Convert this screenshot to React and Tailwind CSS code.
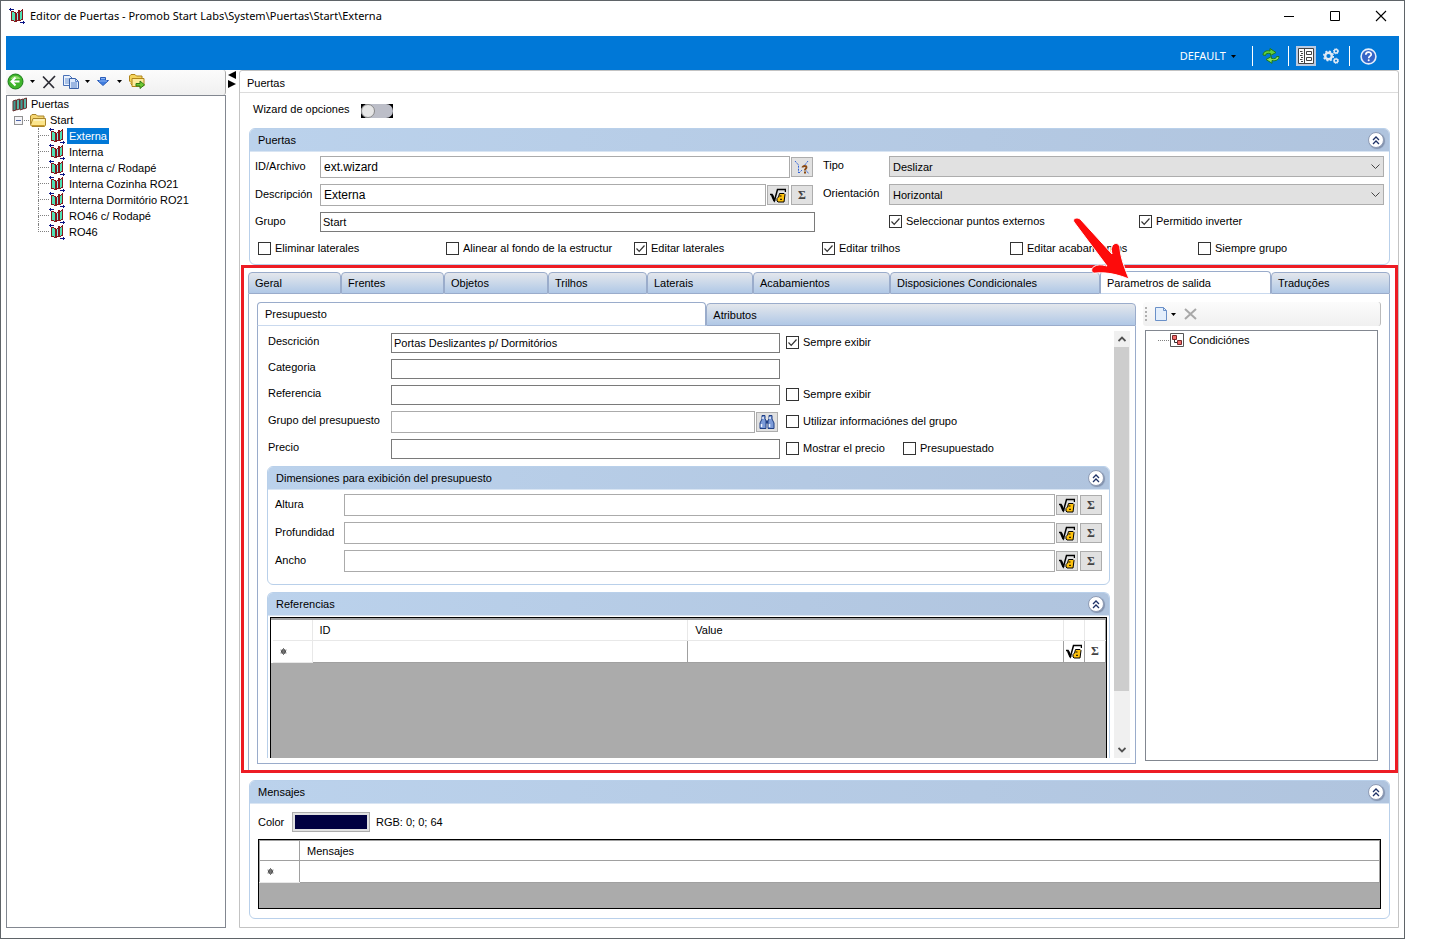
import clsx from "clsx";

const DOORS = [
    "Externa",
    "Interna",
    "Interna c/ Rodapé",
    "Interna Cozinha RO21",
    "Interna Dormitório RO21",
    "RO46 c/ Rodapé",
    "RO46",
];

const TABS = [
    { label: "Geral", width: "w-[93px]" },
    { label: "Frentes", width: "w-[103px]" },
    { label: "Objetos", width: "w-[104px]" },
    { label: "Trilhos", width: "w-[99px]" },
    { label: "Laterais", width: "w-[106px]" },
    { label: "Acabamientos", width: "w-[137px]" },
    { label: "Disposiciones Condicionales", width: "w-[210px]" },
    { label: "Parametros de salida", width: "w-[171px]", active: true },
    { label: "Traduções", width: "flex-1" },
];

const OPTIONS = [
    { label: "Eliminar laterales" },
    { label: "Alinear al fondo de la estructur" },
    { label: "Editar laterales", checked: true },
    { label: "Editar trilhos", checked: true },
    { label: "Editar acabamientos" },
    { label: "Siempre grupo" },
];

function DoorIcon() {
    return (
        <svg
            width="16"
            height="16"
            viewBox="0 0 16 16"
            className="shrink-0"
            shapeRendering="crispEdges"
            aria-hidden="true"
        >
            <path d="M3 3h2v1h2v10H5v-1H3z" fill="#4fe0b4" />
            <path d="M8 4h1V3h2v9H9v1H8z" fill="#8aeef0" />
            <path d="M11 3h1V2h2v9h-1v1h-2z" fill="#4fe0b4" />
            <path
                d="M2 3h1v10H2zM3 3h2v1H3zM5 4h2v1H5zM6 5h2v9H6zM3 12h2v1H3zM5 13h2v1H5zM8 4h1v1H8zM9 3h1v1H9zM9 2h2v11H9zM8 12h2v1H8zM11 3h1v1h-1zM12 2h2v1h-2zM13 1h1v11h-1zM11 12h1v1h-1zM12 11h1v1h-1z"
                fill="#84161a"
            />
            <path d="M0 1h5v1H0zM1 0h1v3H1z" fill="#0b1385" />
            <path d="M11 14h5v1h-5zM14 13h1v3h-1z" fill="#0b1385" />
        </svg>
    );
}

function DoorsIcon() {
    return (
        <svg width="15" height="15" viewBox="0 0 15 15" className="shrink-0" aria-hidden="true">
            <path d="M1 4l3-1v10l-3 1z" fill="#3f9d92" stroke="#6c3030" />
            <path d="M4.500 3l3-1v10l-3 1z" fill="#58b8a8" stroke="#6c3030" />
            <path d="M8 3l3-1v10l-3 1z" fill="#3f9d92" stroke="#6c3030" />
            <path d="M11.500 2l3-1v10l-3 1z" fill="#58b8a8" stroke="#6c3030" />
        </svg>
    );
}

function FolderIcon() {
    return (
        <svg width="16" height="14" viewBox="0 0 16 14" className="shrink-0" aria-hidden="true">
            <path
                d="M.5 11V3L2 1.500h4L7.500 3h6.500v3"
                fill="#f5d672"
                stroke="#a8842a"
            />
            <path d="M3 5.500h12.500v6.500l-1 1.500H2L.5 12z" fill="#fbe58c" stroke="#a8842a" />
            <path d="M3.500 7h11" stroke="#fffbe0" />
            <path d="M1.500 12.500h13" stroke="#c99a2b" />
        </svg>
    );
}

function FormulaIcon() {
    return (
        <svg width="16" height="15" viewBox="0 0 16 15" aria-hidden="true">
            <path
                d="M0 6.500h2L4.500 12.500 7.500 1.500H15.500V4"
                fill="none"
                stroke="#000"
                strokeWidth="1.500"
            />
            <path d="M2 7l2.500 6" stroke="#000" strokeWidth="2.200" />
            <path
                d="M9.500 5.500h4.500l1 1-1 7.500H8L7 13v-2.500l1.500-1.500z"
                fill="#ffc20e"
                stroke="#000"
            />
            <path d="M9.500 8h2M10 11.300h2" fill="none" stroke="#000" />
        </svg>
    );
}

function CaretIcon({ className }) {
    return (
        <svg width="5" height="3" viewBox="0 0 5 3" className={className} aria-hidden="true">
            <path d="M0 0h5L2.500 3z" fill="#000" />
        </svg>
    );
}

function Checkbox({ label, checked }) {
    return (
        <label className="flex items-center gap-1 whitespace-nowrap">
            <span className="relative block size-[13px]">
                <input
                    type="checkbox"
                    defaultChecked={checked}
                    className="peer block size-[13px] appearance-none border border-[#333] bg-white"
                />
                <svg
                    viewBox="0 0 13 13"
                    className="pointer-events-none invisible absolute inset-0 peer-checked:visible"
                    aria-hidden="true"
                >
                    <path
                        d="M2.500 6.500l2.700 2.800 5.300-5.800"
                        fill="none"
                        stroke="#333"
                        strokeWidth="1.200"
                    />
                </svg>
            </span>
            {label}
        </label>
    );
}

function IconButton({ title, children }) {
    return (
        <button
            type="button"
            title={title}
            aria-label={title}
            className="flex h-5 w-[22px] shrink-0 items-center justify-center border border-[#adadad] bg-[#e1e1e1]"
        >
            {children}
        </button>
    );
}

function FormulaButtons() {
    return (
        <div className="flex gap-0.5 pr-0.5">
            <IconButton title="Fórmula">
                <FormulaIcon />
            </IconButton>
            <IconButton title="Suma">
                <span className="font-['Liberation_Serif',serif] text-[12px] font-bold text-[#444]">
                    Σ
                </span>
            </IconButton>
        </div>
    );
}

function TextInput({ id, value = "", tall }) {
    return (
        <input
            id={id}
            type="text"
            defaultValue={value}
            className={clsx(
                "w-full min-w-0 border bg-white",
                tall
                    ? "h-[22px] border-[#ababab] px-[3px] text-[12px]"
                    : "h-5 border-[#7a7a7a] px-0.5 text-[11px]",
            )}
        />
    );
}

function Select({ id, value }) {
    return (
        <div className="relative">
            <select
                id={id}
                defaultValue={value}
                className="block h-[21px] w-full appearance-none border border-[#adadad] bg-[#e1e1e1] px-[3px] text-[11px]"
            >
                <option>{value}</option>
            </select>
            <svg
                width="9"
                height="6"
                viewBox="0 0 9 6"
                className="pointer-events-none absolute top-2 right-1"
                aria-hidden="true"
            >
                <path d="M.5 .5l4 4 4-4" fill="none" stroke="#444" />
            </svg>
        </div>
    );
}

function Group({ title, className, children }) {
    return (
        <section
            className={clsx(
                "flex flex-col rounded-[6px] border border-[#b9d0ea] bg-white",
                className,
            )}
        >
            <header className="flex h-[23px] shrink-0 items-center justify-between rounded-t-[5px] border-b border-[#d9e5f3] bg-linear-to-r from-[#bbd2ec] to-[#b0c4de] pr-[5px] pl-2">
                <h2>{title}</h2>
                <button
                    type="button"
                    aria-label={`Contraer ${title}`}
                    className="flex size-4 items-center justify-center rounded-full border border-[#8f9cb5] bg-white shadow-[1px_1px_1px_#8090ac]"
                >
                    <svg width="8" height="9" viewBox="0 0 8 9" aria-hidden="true">
                        <path
                            d="M1 4l3-3 3 3M1 8l3-3 3 3"
                            fill="none"
                            stroke="#1f3266"
                            strokeWidth="1.300"
                        />
                    </svg>
                </button>
            </header>
            {children}
        </section>
    );
}

function TitleBar() {
    return (
        <div className="flex h-[35px] shrink-0 items-center justify-between pr-[17px] pb-[5px] pl-2">
            <div className="flex items-center gap-[5px] font-['Noto_Sans',sans-serif] text-[11px]">
                <DoorIcon />
                <h1>Editor de Puertas - Promob Start Labs\System\Puertas\Start\Externa</h1>
            </div>
            <div className="flex gap-[34px]">
                <button type="button" aria-label="Minimizar">
                    <svg width="12" height="12" viewBox="0 0 12 12">
                        <path d="M1 6.500h10" stroke="#000" />
                    </svg>
                </button>
                <button type="button" aria-label="Maximizar">
                    <svg width="12" height="12" viewBox="0 0 12 12">
                        <path d="M1.500 1.500h9v9h-9z" fill="none" stroke="#000" />
                    </svg>
                </button>
                <button type="button" aria-label="Cerrar">
                    <svg width="12" height="12" viewBox="0 0 12 12">
                        <path d="M1 1l10 10M11 1L1 11" stroke="#000" strokeWidth="1.100" />
                    </svg>
                </button>
            </div>
        </div>
    );
}

function Ribbon() {
    return (
        <div className="flex h-[34px] shrink-0 items-center justify-end bg-[#0078d7] pt-1.5 pr-[22px]">
            <button
                type="button"
                className="mr-4 flex items-center gap-[5px] font-['Noto_Sans',sans-serif] text-[11px] text-white"
            >
                DEFAULT
                <CaretIcon />
            </button>
            <div className="mr-[9px] h-5 w-px bg-white" />
            <button type="button" aria-label="Actualizar">
                <svg width="18" height="16" viewBox="0 0 18 16">
                    <path
                        d="M1 7c0-3 3-5 7-4V.5L14 4.500 8.500 7.500V5.500C5.500 5 3.500 5.500 3.500 7.500z"
                        fill="#63cf3c"
                        stroke="#1d7a1a"
                    />
                    <path
                        d="M17 8.500c0 3-3 5-7 4v2.800L4 11.500l5.500-3v2c3 .5 5 0 5-2z"
                        fill="#8be05a"
                        stroke="#1d7a1a"
                    />
                </svg>
            </button>
            <div className="mr-[7px] ml-2 h-5 w-px bg-white" />
            <button type="button" aria-label="Propiedades" className="bg-[#bccbe0] p-0.5">
                <svg width="16" height="16" viewBox="0 0 16 16">
                    <path d="M.5 .5h15v15H.5z" fill="#fff" stroke="#444" />
                    <path d="M6.500 1v14" stroke="#444" />
                    <path d="M8.500 3.500h5v3h-5zM8.500 9.500h5v3h-5z" fill="none" stroke="#444" />
                    <path d="M2 3.500h2.500M3 5.500h2M2 7.500h2.500M3 9.500h2M2 11.500h2.500M3 13.500h2" stroke="#444" />
                </svg>
            </button>
            <button type="button" aria-label="Configuración" className="ml-[7px]">
                <svg width="16" height="16" viewBox="0 0 16 16" fill="none">
                    <circle cx="5.500" cy="8" r="3.300" stroke="#dfe9f5" strokeWidth="2.400" />
                    <circle
                        cx="5.500"
                        cy="8"
                        r="4.800"
                        stroke="#dfe9f5"
                        strokeWidth="1.600"
                        strokeDasharray="1.900 1.870"
                    />
                    <circle cx="13" cy="3.200" r="1.800" stroke="#dfe9f5" strokeWidth="1.500" />
                    <circle cx="13" cy="12.800" r="1.800" stroke="#dfe9f5" strokeWidth="1.500" />
                    <circle
                        cx="13"
                        cy="3.200"
                        r="2.600"
                        stroke="#dfe9f5"
                        strokeDasharray="1 1.040"
                    />
                    <circle
                        cx="13"
                        cy="12.800"
                        r="2.600"
                        stroke="#dfe9f5"
                        strokeDasharray="1 1.040"
                    />
                </svg>
            </button>
            <div className="mr-[10px] ml-[10px] h-5 w-px bg-white" />
            <button type="button" aria-label="Ayuda">
                <svg width="17" height="17" viewBox="0 0 17 17">
                    <circle cx="8.500" cy="8.500" r="7.400" fill="#3565c8" stroke="#e6eefb" strokeWidth="1.600" />
                    <path
                        d="M5.800 6.700c0-3.500 5.400-3.300 5.400-.3 0 1.800-2.500 1.800-2.500 3.800"
                        fill="none"
                        stroke="#fff"
                        strokeWidth="1.700"
                    />
                    <circle cx="8.700" cy="12.300" r="1" fill="#fff" />
                </svg>
            </button>
        </div>
    );
}

function Sidebar() {
    return (
        <aside className="flex w-[220px] shrink-0 flex-col">
            <div className="flex h-[25px] shrink-0 items-center rounded-[3px] border-r border-[#aaa] bg-linear-to-b from-[#fcfcfc] to-[#f0f0f0] pb-0.5 pl-px">
                <button type="button" aria-label="Volver">
                    <svg width="17" height="17" viewBox="0 0 17 17">
                        <circle cx="8.500" cy="8.500" r="7.500" fill="#3fb52c" stroke="#1b7d18" />
                        <path d="M3.500 6a5.500 5 0 0 1 10 0z" fill="#8fdc6c" />
                        <path
                            d="M8.500 4.500l-4 4 4 4M5 8.500h7.500"
                            fill="none"
                            stroke="#fff"
                            strokeWidth="2"
                        />
                    </svg>
                </button>
                <CaretIcon className="ml-1.5" />
                <button type="button" aria-label="Eliminar" className="ml-[7px]">
                    <svg width="14" height="14" viewBox="0 0 14 14">
                        <path
                            d="M1 1.500l11 11.500M13 1L1.500 13"
                            stroke="#2c2c34"
                            strokeWidth="1.700"
                        />
                    </svg>
                </button>
                <button type="button" aria-label="Copiar" className="ml-[7px]">
                    <svg width="16" height="14" viewBox="0 0 16 14">
                        <path d="M.5 .5h6l3 3v7h-9z" fill="#eaf2fd" stroke="#4a72b8" />
                        <path d="M2 4h4M2 6h4M2 8h4" stroke="#6f95d2" />
                        <path d="M6.500 3.500h6l3 3v7h-9z" fill="#dce9fb" stroke="#3a62a8" />
                        <path d="M12.500 3.500v3h3M8 8h6M8 10h6M8 12h6" fill="none" stroke="#5a84c8" />
                    </svg>
                </button>
                <CaretIcon className="ml-1.5" />
                <button type="button" aria-label="Bajar" className="ml-[7px]">
                    <svg width="12" height="9" viewBox="0 0 12 9">
                        <path d="M3.500 .5h5v3h3L6 8.500 .5 3.500h3z" fill="#3f7de0" stroke="#2a5cb8" />
                        <path d="M4 1.500h4M2 4h8" stroke="#8ab4f4" />
                    </svg>
                </button>
                <CaretIcon className="ml-2" />
                <button type="button" aria-label="Importar" className="ml-[7px]">
                    <svg width="16" height="15" viewBox="0 0 16 15">
                        <path
                            d="M2 8.500L.5 7V2L2 .5h4L7.500 2H13v9H3L1.500 9.500"
                            fill="#f5d45c"
                            stroke="#b08418"
                        />
                        <path d="M3 4.500h12v7l-1 1H3z" fill="#fdeb9c" stroke="#b08418" />
                        <path
                            d="M7 9.500h4V7l4.500 3.800L11 14.500V12H7z"
                            fill="#6cc832"
                            stroke="#2f7a16"
                        />
                    </svg>
                </button>
            </div>
            <div className="flex-1 border border-[#828790] bg-white pl-[5px]">
                <div className="flex h-4 items-center gap-1">
                    <DoorsIcon />
                    Puertas
                </div>
                <div className="flex h-4 items-center pl-0.5">
                    <button
                        type="button"
                        aria-label="Contraer Start"
                        className="mr-px flex size-[9px] items-center justify-center border border-[#919191] bg-[#f4f4f8]"
                    >
                        <span className="h-px w-[5px] bg-[#4b63a7]" />
                    </button>
                    <span className="mr-px w-[5px] border-t border-dotted border-[#808080]" />
                    <FolderIcon />
                    <span className="pl-1">Start</span>
                </div>
                <ul className="pl-[26px]">
                    {DOORS.map((door, i) => (
                        <li key={door} className="flex h-4 items-center">
                            <span className="flex w-[11px] flex-col self-stretch">
                                <span className="h-2 border-b border-l border-dotted border-[#808080]" />
                                {i < DOORS.length - 1 && (
                                    <span className="h-2 border-l border-dotted border-[#808080]" />
                                )}
                            </span>
                            <DoorIcon />
                            <span
                                className={clsx(
                                    "ml-0.5 h-4 px-0.5 leading-4",
                                    i === 0 && "bg-[#0078d7] text-white",
                                )}
                            >
                                {door}
                            </span>
                        </li>
                    ))}
                </ul>
            </div>
        </aside>
    );
}

function Splitter() {
    return (
        <div className="w-[13px] shrink-0 pt-px pl-[2px]">
            <svg width="8" height="17" viewBox="0 0 8 17" aria-hidden="true">
                <path d="M8 0v8L0 4zM0 9l8 4-8 4z" fill="#000" />
            </svg>
        </div>
    );
}

function DoorGroup() {
    return (
        <Group title="Puertas" className="mr-2 ml-[9px] h-[137px] shrink-0">
            <div className="grid grid-cols-[65px_1fr_74px_1fr] gap-y-1.5 px-[5px] pt-1">
                <label htmlFor="archivo" className="pt-0.5">ID/Archivo</label>
                <div className="flex items-center gap-px pr-0.5">
                    <TextInput id="archivo" value="ext.wizard" tall />
                    <IconButton title="Asistente">
                        <svg width="16" height="15" viewBox="0 0 16 15">
                            <path
                                d="M1 1l3.500 4v8M14 1l-4 5M5 13l3-3M11 9l4 5"
                                fill="none"
                                stroke="#2f62d8"
                                strokeDasharray="2 1"
                            />
                            <path
                                d="M8.500 7.500c0-2 4-2 4 0 0 1.300-1.700 1.300-1.700 3M10 12.500h2"
                                fill="none"
                                stroke="#8a4a14"
                                strokeWidth="1.800"
                            />
                        </svg>
                    </IconButton>
                </div>
                <label htmlFor="tipo" className="pt-px pl-2">Tipo</label>
                <Select id="tipo" value="Deslizar" />

                <label htmlFor="descripcion" className="pt-0.5">Descripción</label>
                <div className="flex items-center gap-px">
                    <TextInput id="descripcion" value="Externa" tall />
                    <FormulaButtons />
                </div>
                <label htmlFor="orientacion" className="pt-px pl-2">Orientación</label>
                <Select id="orientacion" value="Horizontal" />

                <label htmlFor="grupo" className="pt-px">Grupo</label>
                <TextInput id="grupo" value="Start" />
                <div className="col-start-4 grid grid-cols-2 gap-x-[5px] pb-0.5">
                    <Checkbox label="Seleccionar puntos externos" checked />
                    <Checkbox label="Permitido inverter" checked />
                </div>
            </div>
            <div className="grid grid-cols-6 pt-2 pr-[3px] pl-2">
                {OPTIONS.map((option) => (
                    <Checkbox key={option.label} {...option} />
                ))}
            </div>
        </Group>
    );
}

function PointerArrow() {
    return (
        <svg
            width="58"
            height="66"
            viewBox="0 0 58 66"
            className="pointer-events-none absolute -top-[54px] -left-[27px] z-20"
            aria-hidden="true"
        >
            <path
                d="M1 5C-1 1 5-.5 8 3l31 34c-1-4-1-8 2-10 3-2 6 1 6 5 1 10 5 20 9 30-10-4-21-7-33-6-5 1-6-5-1-7 4-2 8-1 12 0z"
                fill="#fd0b0b"
                stroke="#fff"
            />
        </svg>
    );
}

function DimensionRow({ id, label }) {
    return (
        <div className="flex items-start">
            <label htmlFor={id} className="w-[69px] shrink-0 pt-0.5">{label}</label>
            <div className="flex flex-1 items-center gap-px">
                <TextInput id={id} tall />
                <FormulaButtons />
            </div>
        </div>
    );
}

function NewRowMark() {
    return (
        <svg width="7" height="7" viewBox="0 0 7 7" className="ml-[7px]" aria-label="Fila nueva">
            <circle cx="3.500" cy="3.500" r="2.500" fill="#444" />
            <path d="M3.500 0v7M.5 2l6 3M6.500 2l-6 3" stroke="#777" />
        </svg>
    );
}

function ReferencesTable() {
    return (
        <div className="mx-0.5 mt-px min-h-0 flex-1 border border-b-0 border-black bg-[#ababab]">
            <table className="w-full table-fixed border-2 border-t-2 border-r border-b-0 border-[#a0a0a0] border-l-white bg-white">
                <colgroup>
                    <col className="w-[40px]" />
                    <col />
                    <col />
                    <col className="w-[21px]" />
                    <col className="w-[21px]" />
                </colgroup>
                <thead>
                    <tr className="h-[21px] text-left">
                        <th className="border-r border-b border-[#e8e8e8]" />
                        <th className="border-r border-b border-[#e8e8e8] pl-[7px] font-normal">ID</th>
                        <th className="border-r border-b border-[#e8e8e8] pl-[7px] font-normal">Value</th>
                        <th className="border-r border-b border-[#e8e8e8]" />
                        <th className="border-b border-[#e8e8e8]" />
                    </tr>
                </thead>
                <tbody>
                    <tr className="h-[22px]">
                        <td className="border-r border-b border-[#e8e8e8]">
                            <NewRowMark />
                        </td>
                        <td className="border-r border-b border-[#a0a0a0]" />
                        <td className="border-r border-b border-[#a0a0a0]" />
                        <td className="border-r border-b border-[#a0a0a0]">
                            <button type="button" aria-label="Fórmula" className="block pl-0.5">
                                <FormulaIcon />
                            </button>
                        </td>
                        <td className="border-b border-[#a0a0a0] text-center">
                            <button
                                type="button"
                                aria-label="Suma"
                                className="block w-full font-['Liberation_Serif',serif] text-[12px] leading-4 font-bold text-[#444]"
                            >
                                Σ
                            </button>
                        </td>
                    </tr>
                </tbody>
            </table>
        </div>
    );
}

function BudgetForm() {
    return (
        <div className="flex min-h-0 flex-1 flex-col border border-t-0 border-[#9aaccb] pb-[5px]">
            <div className="flex min-h-0 flex-1 pt-[5px] pr-[5px]">
                <div className="flex min-w-0 flex-1 flex-col pr-1 pl-[9px]">
                    <div className="grid grid-cols-[123px_389px_1fr] gap-y-1.5 pt-0.5 pl-px">
                        <label htmlFor="descricion">Descrición</label>
                        <TextInput id="descricion" value="Portas Deslizantes p/ Dormitórios" />
                        <div className="flex pb-0.5 pl-1.5">
                            <Checkbox label="Sempre exibir" checked />
                        </div>

                        <label htmlFor="categoria">Categoria</label>
                        <TextInput id="categoria" />
                        <span />

                        <label htmlFor="referencia">Referencia</label>
                        <TextInput id="referencia" />
                        <div className="flex pb-0.5 pl-1.5">
                            <Checkbox label="Sempre exibir" />
                        </div>

                        <label htmlFor="grupo-presupuesto" className="pt-px">Grupo del presupuesto</label>
                        <div className="flex items-center gap-px pr-0.5">
                            <TextInput id="grupo-presupuesto" tall />
                            <IconButton title="Buscar">
                                <svg width="16" height="14" viewBox="0 0 16 14">
                                    <path
                                        d="M3 .5h3v3l1 2.500v7.500H1V8l2-4zM10 .5h3v3.500l2 4v5.500H9V6l1-2.500z"
                                        fill="#7c9bd8"
                                        stroke="#1f3f86"
                                    />
                                    <path d="M2.500 9v3M10.500 9v3M4 2v2M11 2v2" stroke="#f0f5ff" strokeWidth="1.500" />
                                    <path d="M7 5.500h2v3H7z" fill="#1f3f86" />
                                </svg>
                            </IconButton>
                        </div>
                        <div className="flex pb-0.5 pl-1.5">
                            <Checkbox label="Utilizar informaciónes del grupo" />
                        </div>

                        <label htmlFor="precio">Precio</label>
                        <TextInput id="precio" />
                        <div className="flex gap-[18px] pb-0.5 pl-1.5">
                            <Checkbox label="Mostrar el precio" />
                            <Checkbox label="Presupuestado" />
                        </div>
                    </div>
                    <Group title="Dimensiones para exibición del presupuesto" className="mt-[7px] h-[119px] shrink-0">
                        <div className="flex flex-col gap-1.5 pt-1 pr-[5px] pl-[7px]">
                            <DimensionRow id="altura" label="Altura" />
                            <DimensionRow id="profundidad" label="Profundidad" />
                            <DimensionRow id="ancho" label="Ancho" />
                        </div>
                    </Group>
                    <Group title="Referencias" className="mt-[7px] min-h-0 flex-1 rounded-b-none border-b-0">
                        <ReferencesTable />
                    </Group>
                </div>
                <div className="flex w-4 flex-col bg-[#f0f0f0]">
                    <button type="button" aria-label="Subir" className="flex h-4 items-center justify-center">
                        <svg width="8" height="6" viewBox="0 0 8 6">
                            <path d="M.5 5L4 1.500 7.500 5" fill="none" stroke="#505050" strokeWidth="1.800" />
                        </svg>
                    </button>
                    <div className="mr-px flex-[343] bg-[#cdcdcd]" />
                    <div className="flex-[50]" />
                    <button type="button" aria-label="Bajar" className="flex h-[17px] items-center justify-center">
                        <svg width="8" height="6" viewBox="0 0 8 6">
                            <path d="M.5 1L4 4.500 7.500 1" fill="none" stroke="#505050" strokeWidth="1.800" />
                        </svg>
                    </button>
                </div>
            </div>
        </div>
    );
}

function Conditions() {
    return (
        <aside className="flex w-[245px] shrink-0 flex-col pr-[3px] pl-[7px]">
            <div className="-mr-[3px] flex h-6 items-center rounded-[3px] border-r border-[#bbb] bg-linear-to-b from-[#fcfcfc] to-[#f0f0f0] pl-0.5">
                <span className="h-[14px] border-l-2 border-dotted border-[#b0b0b0]" />
                <button type="button" aria-label="Nuevo" className="ml-2">
                    <svg width="12" height="14" viewBox="0 0 12 14">
                        <path d="M.5 .5h8l3 3v10H.5z" fill="#e4effc" stroke="#6a90c8" />
                        <path d="M8.500 .5v3h3" fill="none" stroke="#6a90c8" />
                    </svg>
                </button>
                <CaretIcon className="ml-1" />
                <button type="button" aria-label="Eliminar condición" className="ml-2">
                    <svg width="13" height="12" viewBox="0 0 13 12">
                        <path d="M1 1l11 10M12 1L1 11" stroke="#a8a8a8" strokeWidth="2" />
                    </svg>
                </button>
            </div>
            <div className="mt-1 mb-[3px] ml-0.5 flex-1 border border-[#828790] bg-white pt-px pl-3">
                <div className="flex h-4 items-center">
                    <span className="mr-px w-[11px] border-t border-dotted border-[#808080]" />
                    <svg width="14" height="14" viewBox="0 0 14 14" aria-hidden="true">
                        <path d="M.5 .5h13v13H.5z" fill="#fff" stroke="#555" />
                        <path d="M4.500 6v3.500H8" fill="none" stroke="#333" />
                        <path d="M2.500 2.500h4v4h-4zM7.500 7.500h4v4h-4z" fill="#f26a6a" stroke="#7a2a2a" />
                    </svg>
                    <span className="pl-[5px]">Condiciónes</span>
                </div>
            </div>
        </aside>
    );
}

function TabSection() {
    return (
        <section className="relative flex min-h-0 flex-1 flex-col pt-1.5 pr-2 pl-2">
            <div role="tablist" className="flex h-[23px] shrink-0 items-end">
                {TABS.map(({ label, width, active }) => (
                    <div key={label} className={clsx("relative", width, active ? "h-[23px]" : "h-[22px]")}>
                        <button
                            type="button"
                            role="tab"
                            aria-selected={active ? "true" : "false"}
                            className={clsx(
                                "block size-full rounded-t-[4px] border border-[#9aaccb] pl-[6px] text-left whitespace-nowrap",
                                active
                                    ? "border-b-[#c9d9ee] bg-white"
                                    : "bg-linear-to-b from-[#e4e7ec] to-[#b0c8e6]",
                            )}
                        >
                            {label}
                        </button>
                        {active && <PointerArrow />}
                    </div>
                ))}
            </div>
            <div className="flex min-h-0 flex-1 border-x border-[#9aaccb] pt-2 pr-2 pb-[9px] pl-2">
                <div className="flex min-w-0 flex-1 flex-col">
                    <div role="tablist" className="flex h-6 shrink-0 items-end">
                        <button
                            type="button"
                            role="tab"
                            aria-selected="true"
                            className="h-6 flex-[449] rounded-t-[4px] border border-[#9aaccb] border-b-[#c9d9ee] bg-white pl-[7px] text-left"
                        >
                            Presupuesto
                        </button>
                        <button
                            type="button"
                            role="tab"
                            aria-selected="false"
                            className="h-[23px] flex-[430] rounded-t-[4px] border border-[#9aaccb] bg-linear-to-b from-[#e4e7ec] to-[#b0c8e6] pl-[6px] text-left"
                        >
                            Atributos
                        </button>
                    </div>
                    <BudgetForm />
                </div>
                <Conditions />
            </div>
            <div className="pointer-events-none absolute inset-y-0 right-0 left-px z-10 border-[3px] border-[#ed1c24]" />
        </section>
    );
}

function MessagesGroup() {
    return (
        <Group title="Mensajes" className="mt-[7px] mr-2 mb-2 ml-[9px] h-[139px] shrink-0">
            <div className="flex items-center pt-2 pl-2">
                <label htmlFor="color" className="w-[34px]">Color</label>
                <button id="color" type="button" className="h-5 w-[78px] border border-[#adadad] bg-[#e1e1e1] p-0.5">
                    <span className="block size-full bg-[#000040]" />
                </button>
                <span className="pl-1.5">RGB: 0; 0; 64</span>
            </div>
            <div className="mx-2 mt-[7px] h-[70px] border border-black bg-[#ababab]">
                <table className="w-full table-fixed border border-b-0 border-[#a0a0a0] bg-white">
                    <colgroup>
                        <col className="w-[40px]" />
                        <col />
                    </colgroup>
                    <thead>
                        <tr className="h-5 text-left">
                            <th className="border-r border-b border-[#a0a0a0]" />
                            <th className="border-b border-[#a0a0a0] pl-[7px] font-normal">Mensajes</th>
                        </tr>
                    </thead>
                    <tbody>
                        <tr className="h-[22px]">
                            <td className="border-r border-b border-[#a0a0a0] border-b-[#e8e8e8]">
                                <NewRowMark />
                            </td>
                            <td className="border-b border-[#a0a0a0]" />
                        </tr>
                    </tbody>
                </table>
            </div>
        </Group>
    );
}

export default function App() {
    return (
        <div className="h-screen min-h-[760px] bg-white pr-[25px] pb-[11px] font-['Liberation_Sans',sans-serif] text-[11px] leading-4 text-black">
            <div className="flex h-full flex-col border border-[#5f6468]">
                <TitleBar />
                <div className="flex min-h-0 flex-1 flex-col px-[5px] pb-[10px]">
                    <Ribbon />
                    <div className="flex min-h-0 flex-1">
                        <Sidebar />
                        <Splitter />
                        <main className="flex min-w-0 flex-1 flex-col rounded-t-[3px] border border-[#c3c3c3]">
                            <div className="flex h-[22px] shrink-0 items-center border-b border-[#dcdcdc] pt-0.5 pl-[7px]">
                                Puertas
                            </div>
                            <div className="flex h-[35px] shrink-0 items-center gap-[11px] pl-[13px]">
                                <label htmlFor="wizard" className="pb-1">Wizard de opciones</label>
                                <span className="relative flex h-[14px] w-8 bg-black">
                                    <input
                                        id="wizard"
                                        type="checkbox"
                                        role="switch"
                                        className="h-[14px] w-8 appearance-none rounded-full bg-[#bcbec8]"
                                    />
                                    <span className="pointer-events-none absolute top-0 left-0 size-[14px] rounded-full border border-[#888] bg-[#e6e6e6]" />
                                </span>
                            </div>
                            <DoorGroup />
                            <TabSection />
                            <MessagesGroup />
                        </main>
                    </div>
                </div>
            </div>
        </div>
    );
}
